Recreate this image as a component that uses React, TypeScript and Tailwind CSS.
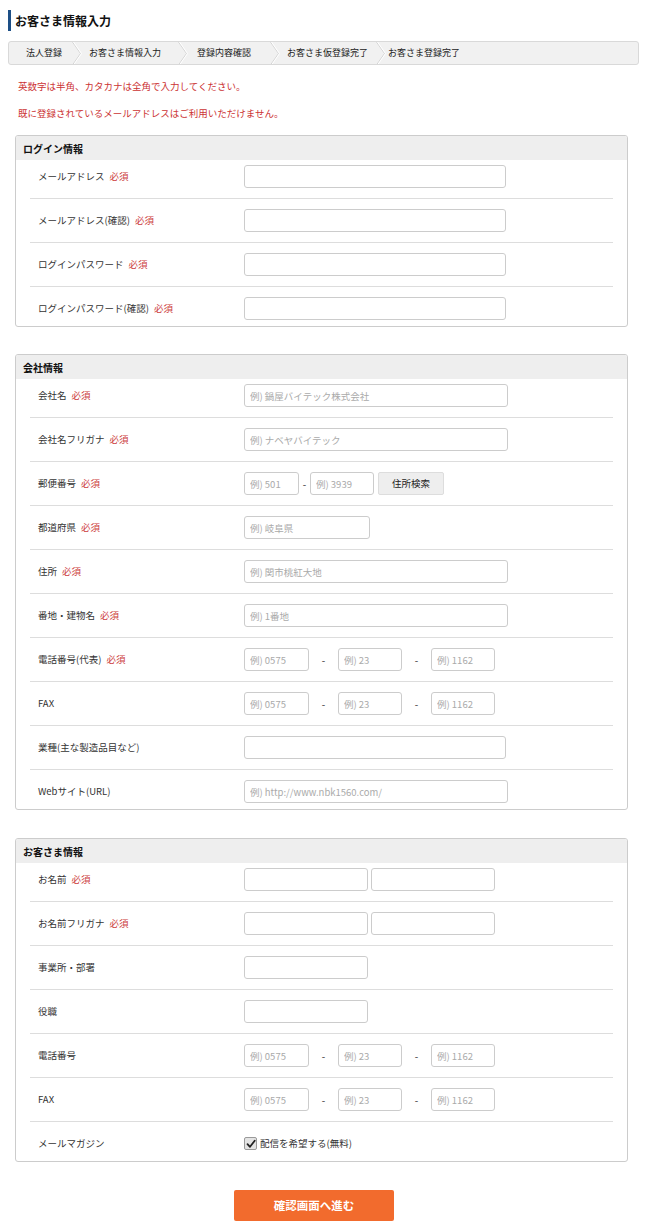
import type { ReactNode } from "react";

const FONT = { fontFamily: '"Noto Sans CJK JP", "Liberation Sans", sans-serif' };

function Chevron() {
  return (
    <svg width="10" height="23" viewBox="0 0 10 23" className="shrink-0">
      <polyline points="0.5,0 8.5,11.5 0.5,23" fill="none" stroke="#d4d4d4" strokeWidth="1" />
      <polyline points="1.5,0 9.5,11.5 1.5,23" fill="none" stroke="#ffffff" strokeWidth="1" />
    </svg>
  );
}

function Breadcrumb() {
  const steps = [
    { label: "法人登録", cls: "w-[63px] pl-[17px]" },
    { label: "お客さま情報入力", cls: "w-[96px] pl-[7px]" },
    { label: "登録内容確認", cls: "w-[82px] pl-[9px]" },
    { label: "お客さま仮登録完了", cls: "w-[96px] pl-[7px]" },
  ];
  return (
    <div className="mt-[10px] flex h-[24px] items-center overflow-hidden rounded-[3px] border border-[#d9d9d9] bg-[#f1f1f1] text-[9px] text-[#222]">
      {steps.map((s) => (
        <div key={s.label} className="flex h-full shrink-0 items-center">
          <span className={`block whitespace-nowrap ${s.cls}`}>{s.label}</span>
          <Chevron />
        </div>
      ))}
      <span className="block whitespace-nowrap pl-[2px]">お客さま登録完了</span>
    </div>
  );
}

function Input({ w = "w-[262px]", placeholder }: { w?: string; placeholder?: string }) {
  return (
    <input
      type="text"
      placeholder={placeholder}
      style={FONT}
      className={`${w} h-[23px] rounded-[3px] border border-[#cccccc] bg-white px-[5px] text-[9.5px] text-[#333] outline-none placeholder:text-[#aaaaaa]`}
    />
  );
}

function Required() {
  return <span className="ml-[5px] text-[#cc3b3b]">必須</span>;
}

function Row({ label, required, children }: { label: string; required?: boolean; children: ReactNode }) {
  return (
    <div className="mx-[14px] flex items-center border-b border-[#dddddd] pt-[10px] pb-[10px] first:pt-[5px] last:border-b-0 last:pb-[6px]">
      <div className="w-[214px] shrink-0 pl-[8px] text-[9.5px] text-[#333]">
        {label}
        {required && <Required />}
      </div>
      <div className="flex h-[23px] items-center">{children}</div>
    </div>
  );
}

function Section({ title, children, className = "" }: { title: string; children: ReactNode; className?: string }) {
  return (
    <div className={`ml-[7px] w-[613px] overflow-hidden rounded-[3px] border border-[#cccccc] ${className}`}>
      <div className="flex h-[24px] items-center bg-[#eeeeee] pl-[7px] text-[10px] font-bold text-[#111]">{title}</div>
      <div>{children}</div>
    </div>
  );
}

function Phone() {
  return (
    <>
      <Input w="w-[65px]" placeholder="例) 0575" />
      <span className="w-[29px] text-center text-[10px] text-[#333]">-</span>
      <Input w="w-[64px]" placeholder="例) 23" />
      <span className="w-[29px] text-center text-[10px] text-[#333]">-</span>
      <Input w="w-[64px]" placeholder="例) 1162" />
    </>
  );
}

export default function App() {
  return (
    <div style={FONT} className="min-h-[1230px] bg-white pb-[8px]">
      <div className="ml-[8px] w-[631px] pt-[10px]">
        <div className="flex h-[21px] items-center border-l-[3px] border-[#1d4f86] pl-[4px] text-[12px] font-bold text-[#111]">
          お客さま情報入力
        </div>

        <Breadcrumb />

        <div className="mt-[14px] pl-[10px] text-[9.5px] leading-[14px] text-[#cc3333]">
          <p>英数字は半角、カタカナは全角で入力してください。</p>
          <p className="mt-[13px]">既に登録されているメールアドレスはご利用いただけません。</p>
        </div>

        <Section title="ログイン情報" className="mt-[15px]">
          <Row label="メールアドレス" required>
            <Input />
          </Row>
          <Row label="メールアドレス(確認)" required>
            <Input />
          </Row>
          <Row label="ログインパスワード" required>
            <Input />
          </Row>
          <Row label="ログインパスワード(確認)" required>
            <Input />
          </Row>
        </Section>

        <Section title="会社情報" className="mt-[27px]">
          <Row label="会社名" required>
            <Input w="w-[264px]" placeholder="例) 鍋屋バイテック株式会社" />
          </Row>
          <Row label="会社名フリガナ" required>
            <Input w="w-[264px]" placeholder="例) ナベヤバイテック" />
          </Row>
          <Row label="郵便番号" required>
            <Input w="w-[55px]" placeholder="例) 501" />
            <span className="w-[11px] text-center text-[10px] text-[#333]">-</span>
            <Input w="w-[64px]" placeholder="例) 3939" />
            <button className="ml-[4px] h-[23px] w-[66px] rounded-[2px] border border-[#dddddd] bg-[#eeeeee] text-[9.5px] text-[#222]">
              住所検索
            </button>
          </Row>
          <Row label="都道府県" required>
            <Input w="w-[126px]" placeholder="例) 岐阜県" />
          </Row>
          <Row label="住所" required>
            <Input w="w-[264px]" placeholder="例) 関市桃紅大地" />
          </Row>
          <Row label="番地・建物名" required>
            <Input w="w-[264px]" placeholder="例) 1番地" />
          </Row>
          <Row label="電話番号(代表)" required>
            <Phone />
          </Row>
          <Row label="FAX">
            <Phone />
          </Row>
          <Row label="業種(主な製造品目など)">
            <Input />
          </Row>
          <Row label="Webサイト(URL)">
            <Input w="w-[264px]" placeholder="例) http://www.nbk1560.com/" />
          </Row>
        </Section>

        <Section title="お客さま情報" className="mt-[28px]">
          <Row label="お名前" required>
            <Input w="w-[124px]" />
            <span className="w-[3px]" />
            <Input w="w-[124px]" />
          </Row>
          <Row label="お名前フリガナ" required>
            <Input w="w-[124px]" />
            <span className="w-[3px]" />
            <Input w="w-[124px]" />
          </Row>
          <Row label="事業所・部署">
            <Input w="w-[124px]" />
          </Row>
          <Row label="役職">
            <Input w="w-[124px]" />
          </Row>
          <Row label="電話番号">
            <Phone />
          </Row>
          <Row label="FAX">
            <Phone />
          </Row>
          <Row label="メールマガジン">
            <label className="flex items-center gap-[3px] text-[9.5px] text-[#333]">
              <span className="flex h-[13px] w-[13px] items-center justify-center rounded-[2px] border border-[#9a9a9a] bg-[#e4e4e4]">
                <svg width="10" height="10" viewBox="0 0 10 10">
                  <path d="M1.5 5.2 L4 7.8 L8.7 1.8" fill="none" stroke="#222" strokeWidth="1.8" strokeLinecap="round" strokeLinejoin="round" />
                </svg>
              </span>
              配信を希望する(無料)
            </label>
          </Row>
        </Section>

        <button className="mt-[28px] ml-[226px] h-[31px] w-[160px] rounded-[2px] bg-[#f26b2d] text-[11.5px] font-bold text-white">
          確認画面へ進む
        </button>
      </div>
    </div>
  );
}
